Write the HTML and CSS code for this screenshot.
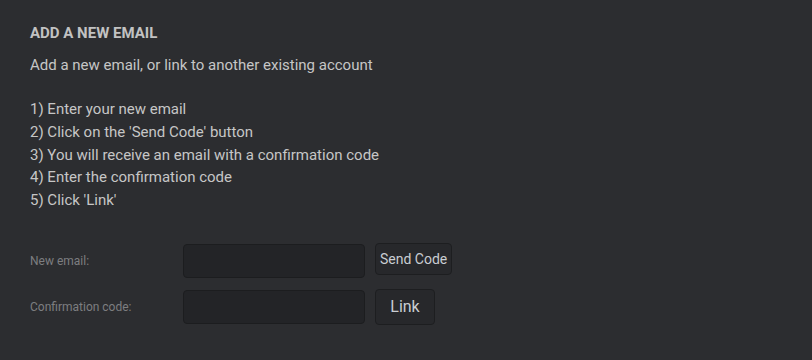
FILE: index.html
```html
<!DOCTYPE html>
<html lang="en">
<head>
    <meta charset="UTF-8">
    <meta name="viewport" content="width=device-width, initial-scale=1.0">
    <title>Add a new email</title>
    <link rel="stylesheet" href="styles.css">
</head>
<body>
    <div class="panel">
        <h3 class="title">ADD A NEW EMAIL</h3>
        <p class="intro">Add a new email, or link to another existing account</p>
        <ol class="steps">
            <li>1) Enter your new email</li>
            <li>2) Click on the 'Send Code' button</li>
            <li>3) You will receive an email with a confirmation code</li>
            <li>4) Enter the confirmation code</li>
            <li>5) Click 'Link'</li>
        </ol>
        <div class="form">
            <div class="form-row">
                <label for="newEmail">New email:</label>
                <input type="text" id="newEmail">
                <button class="btn btn-send">Send Code</button>
            </div>
            <div class="form-row">
                <label for="confirmCode">Confirmation code:</label>
                <input type="text" id="confirmCode">
                <button class="btn btn-link">Link</button>
            </div>
        </div>
    </div>
</body>
</html>
```

FILE: styles.css
```css
body {
    margin: 0;
    padding: 0;
    background-color: #2c2d30;
    font-family: Roboto, "Liberation Sans", sans-serif;
    color: #c6c6c6;
}
.panel {
    padding: 24px 30px;
}
.title {
    margin: 0;
    font-size: 15px;
    font-weight: bold;
    line-height: 18px;
    color: #c2c2c2;
}
.intro {
    margin: 12px 0 0;
    font-size: 15px;
    line-height: 22px;
}
.steps {
    list-style: none;
    margin: 22px 0 0;
    padding: 0;
    font-size: 15px;
    line-height: 22.8px;
}
.form {
    margin-top: 32px;
    display: flex;
    flex-direction: column;
    gap: 12px;
}
.form-row {
    display: flex;
    align-items: flex-start;
}
.form-row label {
    width: 153px;
    align-self: center;
    font-size: 12px;
    color: #7d7e80;
}
.form-row input {
    width: 182px;
    height: 34px;
    box-sizing: border-box;
    background-color: #232427;
    border: 1px solid #1c1d1f;
    border-radius: 4px;
    color: #c6c6c6;
    padding: 0 8px;
    outline: none;
}
.btn {
    margin: -1px 0 0 10px;
    box-sizing: border-box;
    background-color: #27282b;
    border: 1px solid #1d1e20;
    border-radius: 4px;
    color: #c9cdd2;
    font-family: Roboto, "Liberation Sans", sans-serif;
    cursor: pointer;
}
.btn-send {
    height: 32px;
    padding: 0 4px;
    font-size: 14px;
}
.btn-link {
    height: 36px;
    width: 60px;
    font-size: 16px;
}
```
